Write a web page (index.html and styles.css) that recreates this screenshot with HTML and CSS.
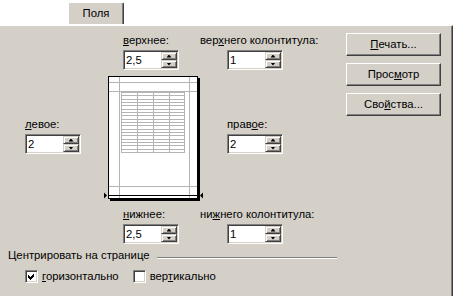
FILE: index.html
```html
<!DOCTYPE html>
<html lang="ru">
<head>
    <meta charset="UTF-8">
    <meta name="viewport" content="width=device-width, initial-scale=1.0">
    <title>Параметры страницы</title>
    <link rel="stylesheet" href="styles.css">
</head>
<body>
    <div class="dialog">
        <div class="tabs">
            <div class="tab">Поля</div>
        </div>
        <div class="panel">
            <div class="main">
                <div class="margins">
                    <div class="field field-top">
                        <div class="label"><u>в</u>ерхнее:</div>
                        <div class="spin">
                            <span class="value">2,5</span>
                            <span class="arrows"><span class="up"></span><span class="down"></span></span>
                        </div>
                    </div>
                    <div class="field field-header">
                        <div class="label">вер<u>х</u>него колонтитула:</div>
                        <div class="spin">
                            <span class="value">1</span>
                            <span class="arrows"><span class="up"></span><span class="down"></span></span>
                        </div>
                    </div>
                    <div class="field field-left">
                        <div class="label"><u>л</u>евое:</div>
                        <div class="spin">
                            <span class="value">2</span>
                            <span class="arrows"><span class="up"></span><span class="down"></span></span>
                        </div>
                    </div>
                    <div class="preview">
                        <svg width="101" height="126" viewBox="103 74 101 126" shape-rendering="crispEdges">
                            <rect x="110" y="76" width="90" height="123" fill="#000"/>
                            <rect x="108.5" y="74.5" width="89" height="122" fill="#fff" stroke="#000"/>
                            <g stroke="#b4b4b4">
                                <line x1="119.5" y1="75" x2="119.5" y2="196"/>
                                <line x1="189.5" y1="75" x2="189.5" y2="196"/>
                                <line x1="109" y1="80.5" x2="197" y2="80.5"/>
                                <line x1="109" y1="89.5" x2="197" y2="89.5"/>
                                <line x1="109" y1="184.5" x2="197" y2="184.5"/>
                                <rect x="121.5" y="90.5" width="63" height="60" fill="none"/>
                                <line x1="137.5" y1="90" x2="137.5" y2="151"/>
                                <line x1="153.5" y1="90" x2="153.5" y2="151"/>
                                <line x1="169.5" y1="90" x2="169.5" y2="151"/>
                                <line x1="121" y1="93.5" x2="185" y2="93.5"/>
                                <line x1="121" y1="97.5" x2="185" y2="97.5"/>
                                <line x1="121" y1="100.5" x2="185" y2="100.5"/>
                                <line x1="121" y1="103.5" x2="185" y2="103.5"/>
                                <line x1="121" y1="107.5" x2="185" y2="107.5"/>
                                <line x1="121" y1="110.5" x2="185" y2="110.5"/>
                                <line x1="121" y1="113.5" x2="185" y2="113.5"/>
                                <line x1="121" y1="117.5" x2="185" y2="117.5"/>
                                <line x1="121" y1="120.5" x2="185" y2="120.5"/>
                                <line x1="121" y1="123.5" x2="185" y2="123.5"/>
                                <line x1="121" y1="127.5" x2="185" y2="127.5"/>
                                <line x1="121" y1="130.5" x2="185" y2="130.5"/>
                                <line x1="121" y1="133.5" x2="185" y2="133.5"/>
                                <line x1="121" y1="137.5" x2="185" y2="137.5"/>
                                <line x1="121" y1="140.5" x2="185" y2="140.5"/>
                                <line x1="121" y1="143.5" x2="185" y2="143.5"/>
                                <line x1="121" y1="147.5" x2="185" y2="147.5"/>
                            </g>
                            <line x1="108" y1="193.5" x2="198" y2="193.5" stroke="#000"/>
                            <polygon points="104,190.5 107,193.5 104,196.5" fill="#000" shape-rendering="auto"/>
                            <polygon points="203,190.5 200,193.5 203,196.5" fill="#000" shape-rendering="auto"/>
                        </svg>
                    </div>
                    <div class="field field-right">
                        <div class="label">прав<u>о</u>е:</div>
                        <div class="spin">
                            <span class="value">2</span>
                            <span class="arrows"><span class="up"></span><span class="down"></span></span>
                        </div>
                    </div>
                    <div class="field field-bottom">
                        <div class="label"><u>н</u>ижнее:</div>
                        <div class="spin">
                            <span class="value">2,5</span>
                            <span class="arrows"><span class="up"></span><span class="down"></span></span>
                        </div>
                    </div>
                    <div class="field field-footer">
                        <div class="label">ни<u>ж</u>него колонтитула:</div>
                        <div class="spin">
                            <span class="value">1</span>
                            <span class="arrows"><span class="up"></span><span class="down"></span></span>
                        </div>
                    </div>
                </div>
                <div class="actions">
                    <div class="btn"><u>П</u>ечать...</div>
                    <div class="btn">Прос<u>м</u>отр</div>
                    <div class="btn">Сво<u>й</u>ства...</div>
                </div>
            </div>
            <div class="group">
                <div class="group-title">
                    <span>Центрировать на странице</span>
                    <span class="rule"></span>
                </div>
                <div class="checks">
                    <div class="check">
                        <span class="box">
                            <svg width="7" height="7" viewBox="0 0 7 7" shape-rendering="crispEdges">
                                <polygon points="0,2 2,4 6,0 6,3 2,7 0,5" fill="#000"/>
                            </svg>
                        </span>
                        <span><u>г</u>оризонтально</span>
                    </div>
                    <div class="check">
                        <span class="box"></span>
                        <span>вер<u>т</u>икально</span>
                    </div>
                </div>
            </div>
        </div>
    </div>
</body>
</html>
```

FILE: styles.css
```css
body {
    margin: 0;
    background: #fff;
    font-family: 'Liberation Sans', Arial, sans-serif;
    font-size: 11.3px;
    line-height: 13px;
    color: #000;
}

.dialog {
    width: 453px;
}

.tabs {
    height: 23px;
    padding-left: 68px;
    box-sizing: border-box;
}

.tab {
    width: 56px;
    height: 22px;
    margin-top: 2px;
    box-sizing: border-box;
    padding-top: 4px;
    text-align: center;
    background: #d4d0c8;
    border-top: 1px solid #fff;
    border-left: 1px solid #fff;
    border-right: 1px solid #404040;
    border-radius: 2px 2px 0 0;
    box-shadow: inset -1px 0 #808080;
    position: relative;
    z-index: 1;
}

.panel {
    height: 273px;
    box-sizing: border-box;
    background: #d4d0c8;
    border-top: 1px solid #fff;
    border-right: 1px solid #404040;
    border-bottom: 1px solid #404040;
    box-shadow: inset -1px -1px #808080;
    padding: 8px 0 0 8px;
}

.main {
    display: flex;
    align-items: flex-start;
}

.margins {
    display: grid;
    grid-template-columns: 79px 96px 140px;
    grid-template-rows: 36px 126px 36px;
    row-gap: 6px;
    margin-left: 17px;
}

.field-top { grid-column: 2; grid-row: 1; padding-left: 19px; }
.field-header { grid-column: 3; grid-row: 1; }
.field-left { grid-column: 1; grid-row: 2; margin-top: 42px; }
.field-right { grid-column: 3; grid-row: 2; margin-top: 42px; padding-left: 27px; }
.field-bottom { grid-column: 2; grid-row: 3; padding-left: 19px; }
.field-footer { grid-column: 3; grid-row: 3; }

.field-header .spin,
.field-footer .spin {
    margin-left: 27px;
}

.label {
    white-space: nowrap;
    margin-bottom: 3px;
}

.spin {
    width: 56px;
    height: 20px;
    box-sizing: border-box;
    background: #fff;
    border: 1px solid;
    border-color: #808080 #fff #fff #808080;
    box-shadow: inset 1px 1px #404040, inset -1px -1px #d4d0c8;
    padding: 1px;
    display: flex;
}

.value {
    flex: 1;
    padding-left: 1px;
    line-height: 16px;
}

.arrows {
    display: flex;
    flex-direction: column;
    width: 16px;
}

.up,
.down {
    height: 8px;
    box-sizing: border-box;
    background: #d4d0c8;
    border: 1px solid;
    border-color: #d4d0c8 #404040 #404040 #d4d0c8;
    box-shadow: inset 1px 1px #fff, inset -1px -1px #808080;
    display: flex;
    align-items: center;
    justify-content: center;
}

.up::after,
.down::after {
    content: '';
    width: 5px;
    height: 3px;
    background: #000;
}

.up::after {
    clip-path: polygon(50% 0, 100% 100%, 0 100%);
}

.down::after {
    clip-path: polygon(0 0, 100% 0, 50% 100%);
}

.preview {
    grid-column: 2;
    grid-row: 2;
    margin-left: -1px;
}

.preview svg {
    display: block;
    overflow: visible;
}

.actions {
    display: flex;
    flex-direction: column;
    gap: 7px;
    margin-left: 6px;
    margin-top: -1px;
}

.btn {
    width: 95px;
    height: 23px;
    box-sizing: border-box;
    border: 1px solid;
    border-color: #fff #404040 #404040 #fff;
    box-shadow: inset -1px -1px #808080;
    text-align: center;
    line-height: 20px;
}

.group {
    width: 329px;
    margin-top: 5px;
}

.group-title {
    display: flex;
    align-items: flex-start;
}

.rule {
    flex: 1;
    height: 0;
    margin: 8px 0 0 7px;
    border-top: 1px solid #808080;
    border-bottom: 1px solid #fff;
}

.checks {
    display: flex;
    gap: 14px;
    padding-left: 17px;
    margin-top: 8px;
}

.check {
    display: flex;
    align-items: flex-start;
    gap: 4px;
}

.box {
    width: 13px;
    height: 13px;
    box-sizing: border-box;
    background: #fff;
    border: 1px solid;
    border-color: #808080 #fff #fff #808080;
    box-shadow: inset 1px 1px #404040, inset -1px -1px #d4d0c8;
    display: flex;
    align-items: center;
    justify-content: center;
}

.box svg {
    display: block;
}
```
